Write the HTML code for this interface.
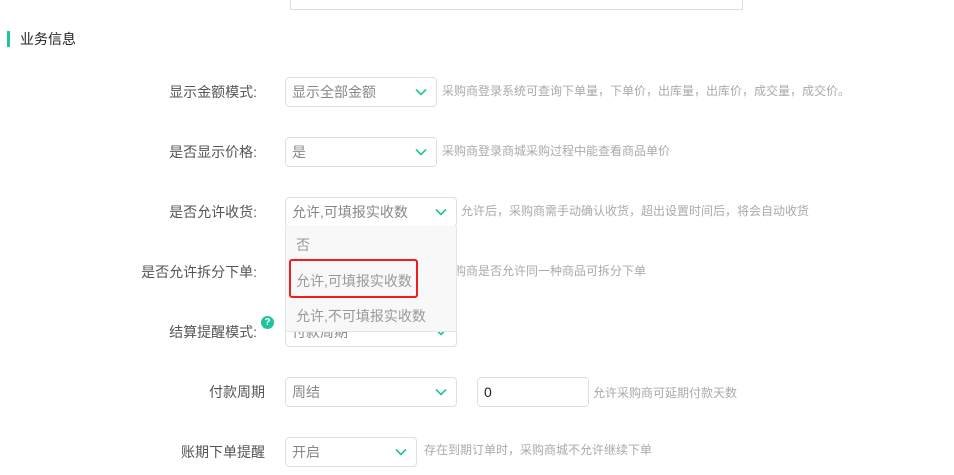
<!DOCTYPE html>
<html><head><meta charset="utf-8"><style>
body{margin:0;width:954px;height:475px;background:#fff;position:relative;overflow:hidden;font-family:"Liberation Sans","Noto Sans CJK SC",sans-serif;}
.a{position:absolute;white-space:nowrap;}
.lbl{font-size:14px;color:#555;text-align:right;line-height:16px;}
.sel{position:absolute;border:1px solid #dcdfe3;border-radius:4px;box-sizing:border-box;background:#fff;font-size:14px;color:#888;padding-left:6px;}
.sel svg{position:absolute;right:9px;top:50%;margin-top:-4px;}
.hint{font-size:12px;color:#aaa;line-height:14px;}
</style></head><body>
<div class="a" style="left:290px;top:-5px;width:453px;height:15px;border:1px solid #dcdfe3;box-sizing:border-box;"></div>
<div class="a" style="left:7px;top:31px;width:3px;height:16px;background:#1fc49b"></div>
<div class="a" style="left:20px;top:31px;font-size:14px;color:#222;line-height:16px;">业务信息</div>

<div class="a lbl" style="right:697px;top:84px;">显示金额模式:</div>
<div class="sel" style="left:285px;top:77px;width:152px;height:30px;line-height:28px;">显示全部金额<svg width="12" height="8" viewBox="0 0 12 8"><path d="M1 1.5L6 6.5L11 1.5" stroke="#1fc49b" stroke-width="1.6" fill="none"/></svg></div>
<div class="a hint" style="left:442px;top:84px;">采购商登录系统可查询下单量，下单价，出库量，出库价，成交量，成交价。</div>

<div class="a lbl" style="right:697px;top:144px;">是否显示价格:</div>
<div class="sel" style="left:285px;top:137px;width:152px;height:30px;line-height:28px;">是<svg width="12" height="8" viewBox="0 0 12 8"><path d="M1 1.5L6 6.5L11 1.5" stroke="#1fc49b" stroke-width="1.6" fill="none"/></svg></div>
<div class="a hint" style="left:442px;top:144px;">采购商登录商城采购过程中能查看商品单价</div>

<div class="a lbl" style="right:697px;top:204px;">是否允许收货:</div>
<div class="sel" style="left:285px;top:197px;width:172px;height:30px;line-height:28px;">允许,可填报实收数<svg width="12" height="8" viewBox="0 0 12 8"><path d="M1 1.5L6 6.5L11 1.5" stroke="#1fc49b" stroke-width="1.6" fill="none"/></svg></div>
<div class="a hint" style="left:461px;top:204px;">允许后，采购商需手动确认收货，超出设置时间后，将会自动收货</div>

<div class="a lbl" style="right:697px;top:264px;">是否允许拆分下单:</div>
<div class="a hint" style="left:442px;top:264px;">采购商是否允许同一种商品可拆分下单</div>

<div class="a lbl" style="right:697px;top:324px;">结算提醒模式:</div>
<div class="a" style="left:261px;top:316px;width:13px;height:13px;border-radius:50%;background:#1fc49b;color:#fff;font-size:10px;font-weight:bold;text-align:center;line-height:13px;">?</div>
<div class="sel" style="left:285px;top:317px;width:172px;height:30px;line-height:28px;">付款周期<svg width="12" height="8" viewBox="0 0 12 8"><path d="M1 1.5L6 6.5L11 1.5" stroke="#1fc49b" stroke-width="1.6" fill="none"/></svg></div>

<div class="a" style="left:285px;top:226px;width:172px;height:106px;background:#f8f8f8;border:1px solid #e4e6e8;border-top:none;box-sizing:border-box;font-size:14px;color:#999;">
<div class="a" style="left:10px;top:9px;">否</div>
<div class="a" style="left:3px;top:33px;width:125px;height:35px;border:2px solid #f01e1e;border-radius:3px;"></div>
<div class="a" style="left:10px;top:45px;">允许,可填报实收数</div>
<div class="a" style="left:10px;top:80px;">允许,不可填报实收数</div>
</div>

<div class="a lbl" style="right:689px;top:384px;">付款周期</div>
<div class="sel" style="left:285px;top:377px;width:172px;height:30px;line-height:28px;">周结<svg width="12" height="8" viewBox="0 0 12 8"><path d="M1 1.5L6 6.5L11 1.5" stroke="#1fc49b" stroke-width="1.6" fill="none"/></svg></div>
<div class="sel" style="left:477px;top:377px;width:112px;height:30px;line-height:28px;color:#222;">0</div>
<div class="a hint" style="left:593px;top:386px;">允许采购商可延期付款天数</div>

<div class="a lbl" style="right:689px;top:444px;">账期下单提醒</div>
<div class="sel" style="left:285px;top:437px;width:132px;height:30px;line-height:28px;">开启<svg width="12" height="8" viewBox="0 0 12 8"><path d="M1 1.5L6 6.5L11 1.5" stroke="#1fc49b" stroke-width="1.6" fill="none"/></svg></div>
<div class="a hint" style="left:424px;top:443px;">存在到期订单时，采购商城不允许继续下单</div>
</body></html>
